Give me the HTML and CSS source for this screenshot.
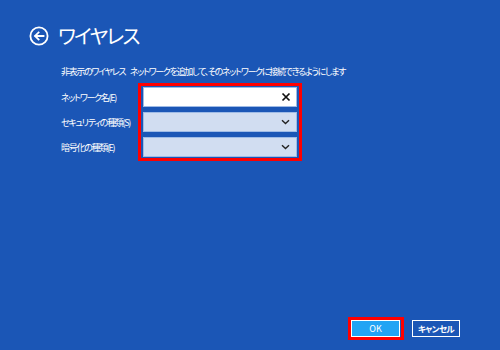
FILE: index.html
```html
<!DOCTYPE html>
<html lang="ja">
<head>
<meta charset="utf-8">
<title>ワイヤレス</title>
<link rel="stylesheet" href="styles.css">
</head>
<body>
<div class="page">
  <header class="title-row">
    <svg class="back" width="20" height="20" viewBox="0 0 20 20" aria-hidden="true">
      <circle cx="10" cy="10" r="8.6" fill="none" stroke="#fff" stroke-width="1.8"/>
      <path d="M14.5 10H6.2M9.6 6.4L6 10l3.6 3.6" fill="none" stroke="#fff" stroke-width="1.8" stroke-linecap="square"/>
    </svg>
    <h1 class="title">ワイヤレス</h1>
  </header>
  <p class="desc">非表示のワイヤレス ネットワークを追加して、そのネットワークに接続できるようにします</p>
  <div class="form">
    <div class="labels">
      <div class="label">ネットワーク名(E)</div>
      <div class="label">セキュリティの種類(S)</div>
      <div class="label">暗号化の種類(E)</div>
    </div>
    <div class="fields">
      <div class="field text">
        <svg class="icon" width="10" height="10" viewBox="0 0 10 10" aria-hidden="true">
          <path d="M1.5 1.5l7 7M8.5 1.5l-7 7" stroke="#111" stroke-width="1.7"/>
        </svg>
      </div>
      <div class="field select">
        <svg class="icon" width="9" height="6" viewBox="0 0 9 6" aria-hidden="true">
          <path d="M1 1.2l3.5 3.3L8 1.2" fill="none" stroke="#222" stroke-width="1.4"/>
        </svg>
      </div>
      <div class="field select">
        <svg class="icon" width="9" height="6" viewBox="0 0 9 6" aria-hidden="true">
          <path d="M1 1.2l3.5 3.3L8 1.2" fill="none" stroke="#222" stroke-width="1.4"/>
        </svg>
      </div>
    </div>
  </div>
  <footer class="buttons">
    <div class="hl"><button class="btn ok">OK</button></div>
    <button class="btn cancel">キャンセル</button>
  </footer>
</div>
</body>
</html>
```
FILE: styles.css
```css
* { box-sizing: border-box; }
html, body { margin: 0; padding: 0; }
body {
  background: #1b56b6;
  color: #fff;
  font-family: "Noto Sans CJK JP", "Noto Sans", sans-serif;
  font-feature-settings: "palt";
}
.page {
  width: 500px;
  height: 350px;
  display: flex;
  flex-direction: column;
  padding: 26px 40px 10px 29px;
}
.title-row {
  display: flex;
  align-items: center;
  gap: 9px;
  height: 20px;
}
.back { display: block; flex: none; }
.title {
  margin: 0;
  font-size: 20px;
  font-weight: 400;
  line-height: 20px;
  letter-spacing: -1.7px;
}
.desc {
  margin: 20px 0 0 32px;
  font-size: 9px;
  line-height: 12px;
  letter-spacing: -1.3px;
  word-spacing: 4px;
  white-space: nowrap;
}
.form {
  display: flex;
  margin: 5px 0 0 32px;
}
.labels {
  width: 77px;
  padding-top: 4px;
  display: flex;
  flex-direction: column;
  gap: 5px;
}
.label {
  height: 20px;
  display: flex;
  align-items: center;
  font-size: 9px;
  letter-spacing: -1.3px;
  white-space: nowrap;
}
.fields {
  border: 3px solid #ff0000;
  padding: 1px 2px;
  width: 164px;
  display: flex;
  flex-direction: column;
  gap: 5px;
}
.field {
  height: 20px;
  border: 1px solid #9fbbe6;
  display: flex;
  align-items: center;
  justify-content: flex-end;
  padding-right: 5px;
}
.field.text { background: #fff; }
.field.select { background: #d1ddf1; padding-right: 6px; }
.icon { display: block; }
.buttons {
  margin-top: auto;
  display: flex;
  justify-content: flex-end;
  align-items: center;
  gap: 8px;
}
.hl {
  border: 3px solid #ff0000;
  padding: 0 1px 0 0;
}
.btn {
  display: block;
  height: 17px;
  width: 48px;
  margin: 0;
  padding: 0;
  border: 1px solid #fff;
  color: #fff;
  font-family: inherit;
  font-feature-settings: "palt";
  font-size: 9px;
  line-height: 15px;
}
.ok { background: #22a4f4; width: 49px; }
.cancel { background: #1b56b6; font-weight: 700; font-size: 8.5px; letter-spacing: -0.6px; }
```
